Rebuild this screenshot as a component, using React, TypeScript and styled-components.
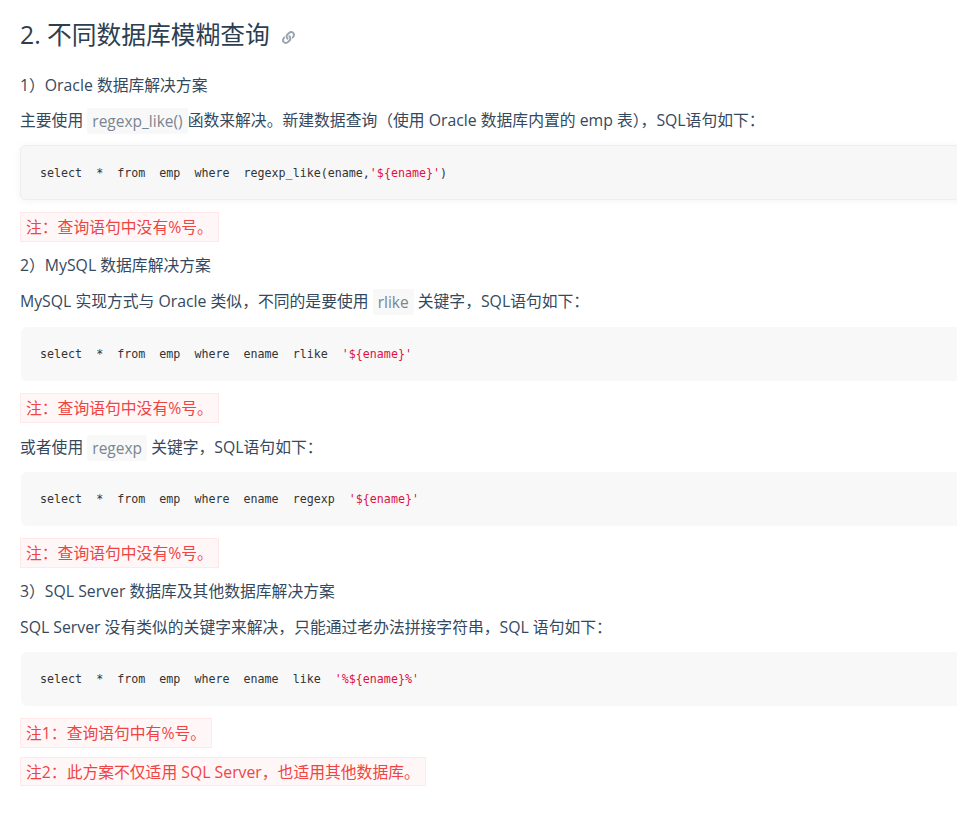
import React from "react";
import styled, { createGlobalStyle } from "styled-components";
import { FaLink } from "react-icons/fa";

const Global = createGlobalStyle`
  html, body { margin: 0; padding: 0; background: #fff; overflow: hidden; }
  body { font-family: "Open Sans", "Noto Sans CJK SC", sans-serif; color: #2c3e50; }
`;

const Article = styled.main`
  width: 1100px;
  height: 826px;
  box-sizing: border-box;
  padding: 20px 0 0 20px;
`;

const Title = styled.h2`
  margin: 0 0 23px;
  font-size: 24.75px;
  font-weight: 400;
  line-height: 30px;
  display: flex;
  align-items: center;
  color: #2c3e50;
`;

const Anchor = styled.a`
  margin-left: 12px;
  display: inline-flex;
  color: #9aa4ae;
  font-size: 13px;
  margin-top: 4px;
`;

const Para = styled.p<{ $gap?: number }>`
  margin: 0 0 ${(p) => p.$gap ?? 12}px;
  font-size: 15.8px;
  line-height: 24px;
  white-space: pre;
  color: #34495e;
`;

const InlineCode = styled.code`
  display: inline-block;
  font-family: inherit;
  font-size: 15.5px;
  line-height: 26px;
  height: 26px;
  vertical-align: top;
  margin: 0 0 -2px;
  padding: 0 5px;
  background: #f8f8f8;
  color: #7a8593;
  border-radius: 2px;
`;

const CodeBlock = styled.pre<{ $raised?: boolean }>`
  margin: 0 0 12px ${(p) => (p.$raised ? 0 : 1)}px;
  height: ${(p) => (p.$raised ? 55 : 54)}px;
  box-sizing: border-box;
  padding: 0 19px;
  display: flex;
  align-items: center;
  background: #f8f8f8;
  border-radius: 6px;
  font-family: "Liberation Mono", monospace;
  font-size: 11.67px;
  line-height: 16px;
  color: #333;
  white-space: pre;
  ${(p) =>
    p.$raised
      ? `border: 1px solid #eeeeef; background: #f7f7f8; box-shadow: 0 1px 8px rgba(0,0,0,0.05); padding: 0 19px;`
      : ""}
`;

const Str = styled.span`
  color: #dd1144;
`;

const Note = styled.div<{ $gap?: number; $height?: number }>`
  width: fit-content;
  box-sizing: border-box;
  height: ${(p) => p.$height ?? 30}px;
  margin: 0 0 ${(p) => p.$gap ?? 11}px;
  padding: 0 5px;
  border: 1px solid #ffe8e8;
  background: #fff7f7;
  color: #ef4444;
  font-size: 15.8px;
  line-height: 28px;
  white-space: pre;
`;

const Code = ({ parts, raised }: { parts: [string, string]; raised?: boolean }) => (
  <CodeBlock $raised={raised}>
    <code>
      {parts[0]}
      <Str>{parts[1]}</Str>
      {parts[0].includes("regexp_like") ? ")" : ""}
    </code>
  </CodeBlock>
);

export default function App() {
  return (
    <Article>
      <Global />
      <Title>
        2. 不同数据库模糊查询
        <Anchor aria-label="link">
          <FaLink />
        </Anchor>
      </Title>
      <Para $gap={11}>1）Oracle 数据库解决方案</Para>
      <Para $gap={13}>
        主要使用 <InlineCode>regexp_like()</InlineCode>函数来解决。新建数据查询（使用 Oracle 数据库内置的 emp 表），SQL语句如下：
      </Para>
      <Code raised parts={["select  *  from  emp  where  regexp_like(ename,", "'${ename}'"]} />
      <Note>注：查询语句中没有%号。</Note>
      <Para>2）MySQL 数据库解决方案</Para>
      <Para $gap={14}>
        MySQL 实现方式与 Oracle 类似，不同的是要使用 <InlineCode>rlike</InlineCode> 关键字，SQL语句如下：
      </Para>
      <Code parts={["select  *  from  emp  where  ename  rlike  ", "'${ename}'"]} />
      <Note $gap={12}>注：查询语句中没有%号。</Note>
      <Para $gap={13}>
        或者使用 <InlineCode>regexp</InlineCode> 关键字，SQL语句如下：
      </Para>
      <Code parts={["select  *  from  emp  where  ename  regexp  ", "'${ename}'"]} />
      <Note>注：查询语句中没有%号。</Note>
      <Para>3）SQL Server 数据库及其他数据库解决方案</Para>
      <Para $gap={13}>SQL Server 没有类似的关键字来解决，只能通过老办法拼接字符串，SQL 语句如下：</Para>
      <Code parts={["select  *  from  emp  where  ename  like  ", "'%${ename}%'"]} />
      <Note $gap={9}>注1：查询语句中有%号。</Note>
      <Note $height={29}>注2：此方案不仅适用 SQL Server，也适用其他数据库。</Note>
    </Article>
  );
}
